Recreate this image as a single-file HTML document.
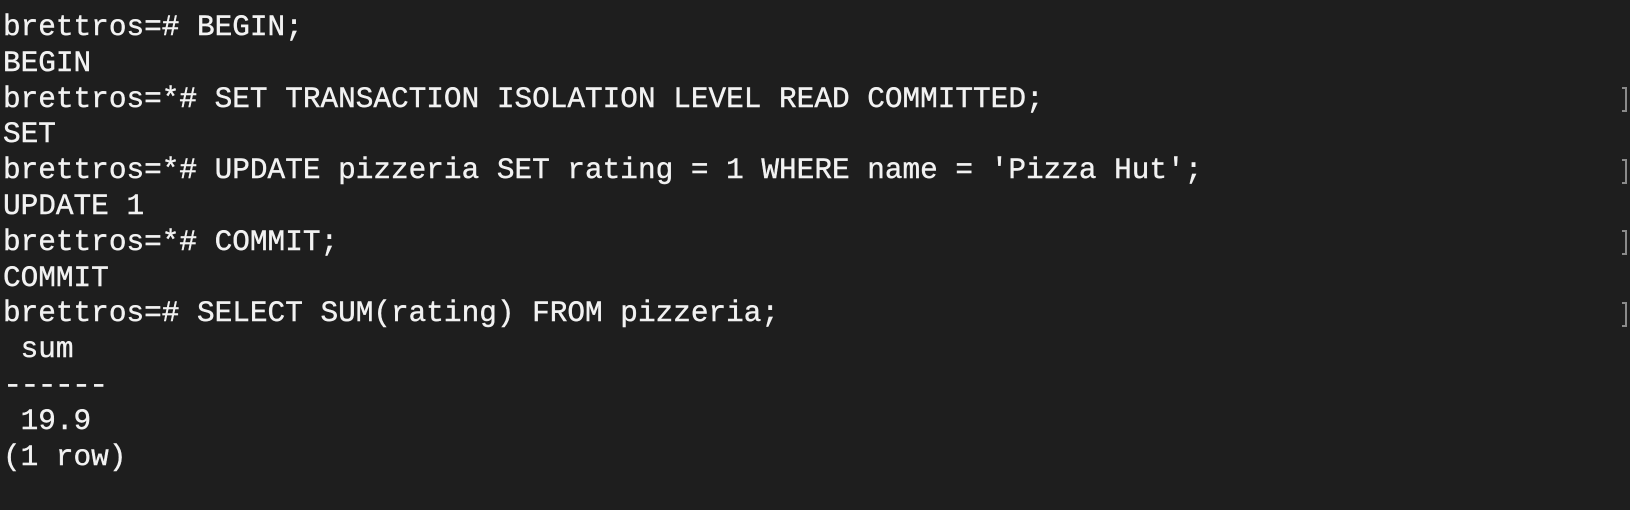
<!DOCTYPE html>
<html><head><style>
html,body{margin:0;padding:0;background:#1e1e1e;width:1630px;height:510px;overflow:hidden}
pre{margin:0;position:absolute;left:3px;top:10px;font-family:"Liberation Mono",monospace;font-size:29.4px;line-height:35.8px;color:#f2f2f2;-webkit-text-stroke:0.4px #f2f2f2}
.b{position:absolute;left:1622px;height:25px;border:2px solid #8a8a8a;border-left:none;box-sizing:border-box;width:5px}
.d{letter-spacing:-2px;transform:scaleX(1.1);display:inline-block;transform-origin:left}
</style></head><body>
<pre>brettros=# BEGIN;
BEGIN
brettros=*# SET TRANSACTION ISOLATION LEVEL READ COMMITTED;
SET
brettros=*# UPDATE pizzeria SET rating = 1 WHERE name = 'Pizza Hut';
UPDATE 1
brettros=*# COMMIT;
COMMIT
brettros=# SELECT SUM(rating) FROM pizzeria;
 sum
<span class="d">------</span>
 19.9
(1 row)
</pre>
<div class="b" style="top:87px"></div>
<div class="b" style="top:159px"></div>
<div class="b" style="top:230px"></div>
<div class="b" style="top:302px"></div>
</body></html>
